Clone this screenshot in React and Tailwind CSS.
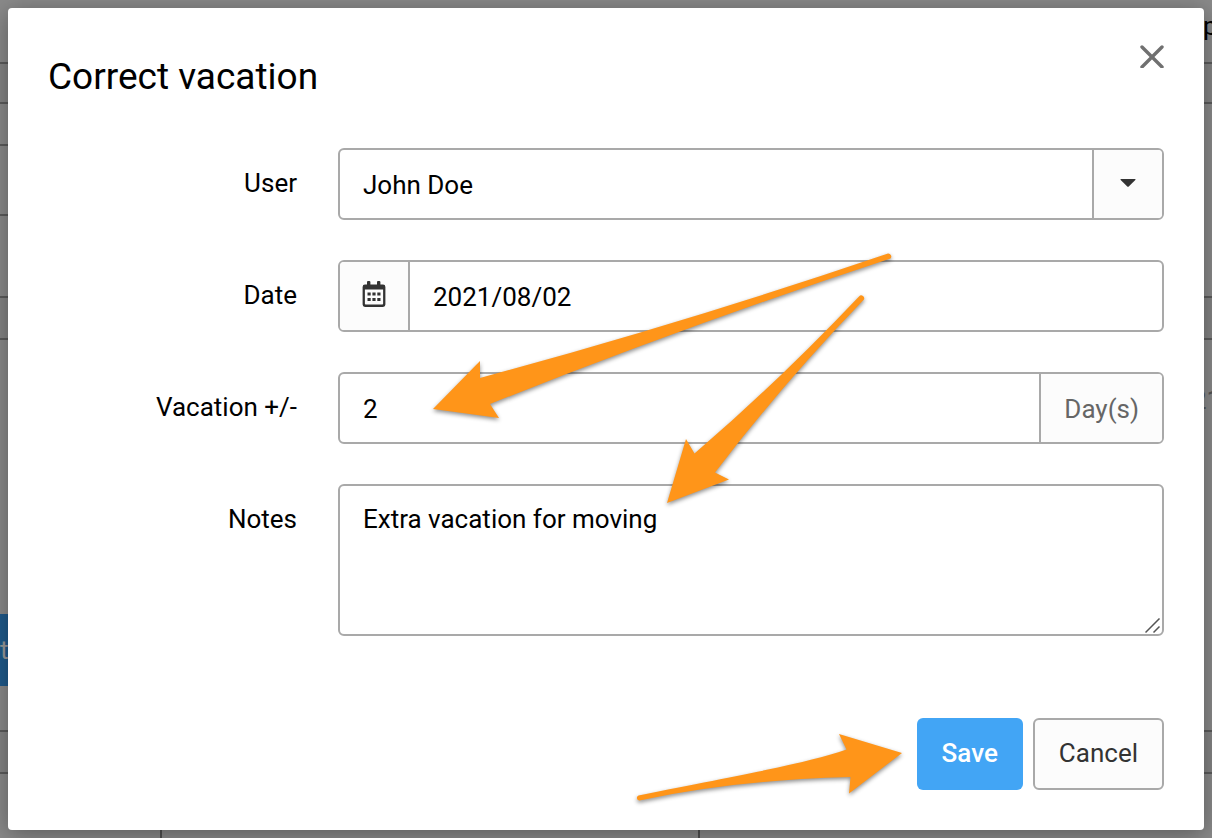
import { useState } from 'react';

const fieldBox = 'flex h-18 overflow-hidden rounded-md border-2 border-[#a9a9a9] bg-white';
const fieldText = 'min-w-0 flex-1 bg-transparent px-[23px] pt-0.5 text-[26px] leading-8 text-black outline-none';
const label = 'w-[250px] shrink-0 pt-[19px] pr-px text-right text-[26px] leading-8 text-black';

// Dimmed schedule page that stays visible around the dialog
function PageBehind() {
  return (
    <div aria-hidden="true" className="absolute inset-0 flex flex-col overflow-hidden bg-[#8a8a8a] text-[26px] leading-8">
      <div className="flex h-16 shrink-0 justify-end border-b-2 border-[#5c5c5c] pt-2.5">
        <span className="w-[9px] text-black">pm</span>
      </div>
      <div className="h-10 shrink-0 border-b-2 border-[#5c5c5c] bg-[#848484]" />
      <div className="h-[42px] w-40 shrink-0 border-b-2 border-[#5c5c5c]" />
      <div className="h-[70px] w-40 shrink-0 border-b-2 border-[#5c5c5c]" />
      <div className="h-[82px] shrink-0 border-b-2 border-[#5c5c5c]" />
      <div className="h-[42px] shrink-0 border-b-2 border-[#5c5c5c] bg-[#848484]" />
      <div className="flex h-[274px] shrink-0 justify-end pt-11">
        <span className="w-5 text-[#555]">21</span>
      </div>
      <div className="flex h-18 w-40 shrink-0 items-center bg-[#1f5a8b] text-[#9a9a9a]">t</div>
      <div className="h-[46px] shrink-0 border-b-2 border-[#5c5c5c]" />
      <div className="h-[42px] shrink-0 border-b-2 border-[#5c5c5c] bg-[#848484]" />
      <div className="flex flex-1">
        <div className="w-[162px] border-r-2 border-[#4f4f4f]" />
        <div className="w-[538px] border-r-2 border-[#4f4f4f]" />
      </div>
    </div>
  );
}

function CalendarIcon() {
  return (
    <svg className="h-[26px] w-6" viewBox="0 0 24 26" fill="#333">
      <rect x="5" y="0" width="3.4" height="7" rx="1" />
      <rect x="15" y="0" width="3.4" height="7" rx="1" />
      <path fillRule="evenodd" d="M3 3.500h18a2.400 2.400 0 0 1 2.400 2.400v17.700A2.400 2.400 0 0 1 21 26H3a2.400 2.400 0 0 1-2.400-2.400V5.900A2.400 2.400 0 0 1 3 3.500zM2.900 8.500v14.300a.8.8 0 0 0 .8.8h16.600a.8.8 0 0 0 .8-.8V8.500z" />
      <path d="M5.500 11.500h3.200v3H5.500zM10.400 11.500h3.200v3h-3.200zM15.300 11.500h3.200v3h-3.200zM5.500 17h3.200v3H5.500zM10.400 17h3.200v3h-3.200zM15.300 17h3.200v3h-3.200z" />
    </svg>
  );
}

// Hints pointing at the fields to fill in and the save button
function Arrows() {
  return (
    <svg
      aria-hidden="true"
      className="pointer-events-none absolute top-0 right-0 h-[838px] w-[1212px] drop-shadow-[0_2px_2px_rgba(0,0,0,0.45)]"
      viewBox="0 0 1212 838"
      fill="#ff9519"
    >
      <path d="M433 409L480 361V378Q690 321 888 253.500A3 3 0 0 1 890.500 258.500Q686 326 490 404L499 418Z" />
      <path d="M667 503L686 439L694.500 453.500Q778 382 859 296.500A2.800 2.800 0 0 1 863.500 300Q785 381 715 472.500L729 479.500Z" />
      <path d="M902 753L839 734L846.500 749.500C800 765 740 775 638.500 795.500A2.600 2.600 0 0 0 639.500 800.500Q735 780 850.500 777L849 793.500Z" />
    </svg>
  );
}

export default function App() {
  const [user, setUser] = useState('John Doe');
  const [date, setDate] = useState('2021/08/02');
  const [days, setDays] = useState('2');
  const [notes, setNotes] = useState('Extra vacation for moving');

  return (
    <div className="relative min-h-screen p-2 font-[Roboto,sans-serif]">
      <PageBehind />

      <div
        role="dialog"
        aria-labelledby="dialog-title"
        className="relative rounded bg-white p-10 shadow-[0_4px_24px_rgba(0,0,0,0.35)]"
      >
        {/* Header */}
        <div className="mb-10 flex h-15 items-start justify-between">
          <h1 id="dialog-title" className="pt-[5px] text-[37px] leading-12 text-black">
            Correct vacation
          </h1>
          <button type="button" aria-label="Close" className="-mt-1">
            <svg className="size-6" viewBox="0 0 24 24" fill="none" stroke="#707070" strokeWidth="3.4" strokeLinecap="round">
              <path d="M2 3l20 20M22 3L2 23" />
            </svg>
          </button>
        </div>

        {/* Form */}
        <form onSubmit={(e) => e.preventDefault()}>
          <div className="flex flex-col gap-10">
            <div className="flex gap-10">
              <label htmlFor="user" className={label}>User</label>
              <div className="grid flex-1 overflow-hidden rounded-md border-2 border-[#a9a9a9] bg-white">
                <select
                  id="user"
                  value={user}
                  onChange={(e) => setUser(e.target.value)}
                  className="col-start-1 row-start-1 h-17 appearance-none px-[23px] pt-0.5 text-[26px] leading-8 text-black outline-none"
                >
                  <option>John Doe</option>
                </select>
                <span className="pointer-events-none col-start-1 row-start-1 flex w-[70px] items-center justify-center justify-self-end border-l-2 border-[#a9a9a9] bg-[#fcfcfc] pb-0.5">
                  <svg className="h-2 w-4" viewBox="0 0 16 8" fill="#333">
                    <path d="M1 0h14q1 0 .3.900L9 7.300Q8 8.300 7 7.300L.7.900Q0 0 1 0z" />
                  </svg>
                </span>
              </div>
            </div>

            <div className="flex gap-10">
              <label htmlFor="date" className={label}>Date</label>
              <div className={`${fieldBox} flex-1`}>
                <span className="flex w-[70px] items-center justify-center border-r-2 border-[#a9a9a9] bg-[#fcfcfc] pb-1">
                  <CalendarIcon />
                </span>
                <input
                  id="date"
                  type="text"
                  value={date}
                  onChange={(e) => setDate(e.target.value)}
                  className={fieldText}
                />
              </div>
            </div>

            <div className="flex gap-10">
              <label htmlFor="days" className={label}>Vacation +/-</label>
              <div className={`${fieldBox} flex-1`}>
                <input
                  id="days"
                  type="text"
                  value={days}
                  onChange={(e) => setDays(e.target.value)}
                  className={fieldText}
                />
                <span className="flex items-center border-l-2 border-[#a9a9a9] bg-[#fcfcfc] px-[23px] pt-0.5 text-[26px] leading-8 text-[#666]">
                  Day(s)
                </span>
              </div>
            </div>

            <div className="flex gap-10">
              <label htmlFor="notes" className={label}>Notes</label>
              <div className="grid flex-1 rounded-md border-2 border-[#a9a9a9] bg-white">
                <textarea
                  id="notes"
                  value={notes}
                  onChange={(e) => setNotes(e.target.value)}
                  className="col-start-1 row-start-1 h-37 resize-none px-[23px] py-[15px] text-[26px] leading-9 text-black outline-none"
                />
                <svg
                  aria-hidden="true"
                  className="pointer-events-none col-start-1 row-start-1 mr-px size-4 self-end justify-self-end"
                  viewBox="0 0 16 16"
                  fill="none"
                  stroke="#555"
                  strokeWidth="1.5"
                >
                  <path d="M.500 14.500l14-14M8.500 14.500l6-6" />
                </svg>
              </div>
            </div>
          </div>

          {/* Actions */}
          <div className="mt-[82px] flex justify-end gap-2.5">
            <button type="submit" className="h-18 rounded-md bg-[#42a5f5] px-[25px] pb-0.5 text-[26px] leading-8 font-medium text-white">
              Save
            </button>
            <button type="button" className="h-18 rounded-md border-2 border-[#a9a9a9] bg-[#fcfcfc] px-6 pb-0.5 text-[26px] leading-8 text-[#333]">
              Cancel
            </button>
          </div>
        </form>
      </div>

      <Arrows />
    </div>
  );
}
